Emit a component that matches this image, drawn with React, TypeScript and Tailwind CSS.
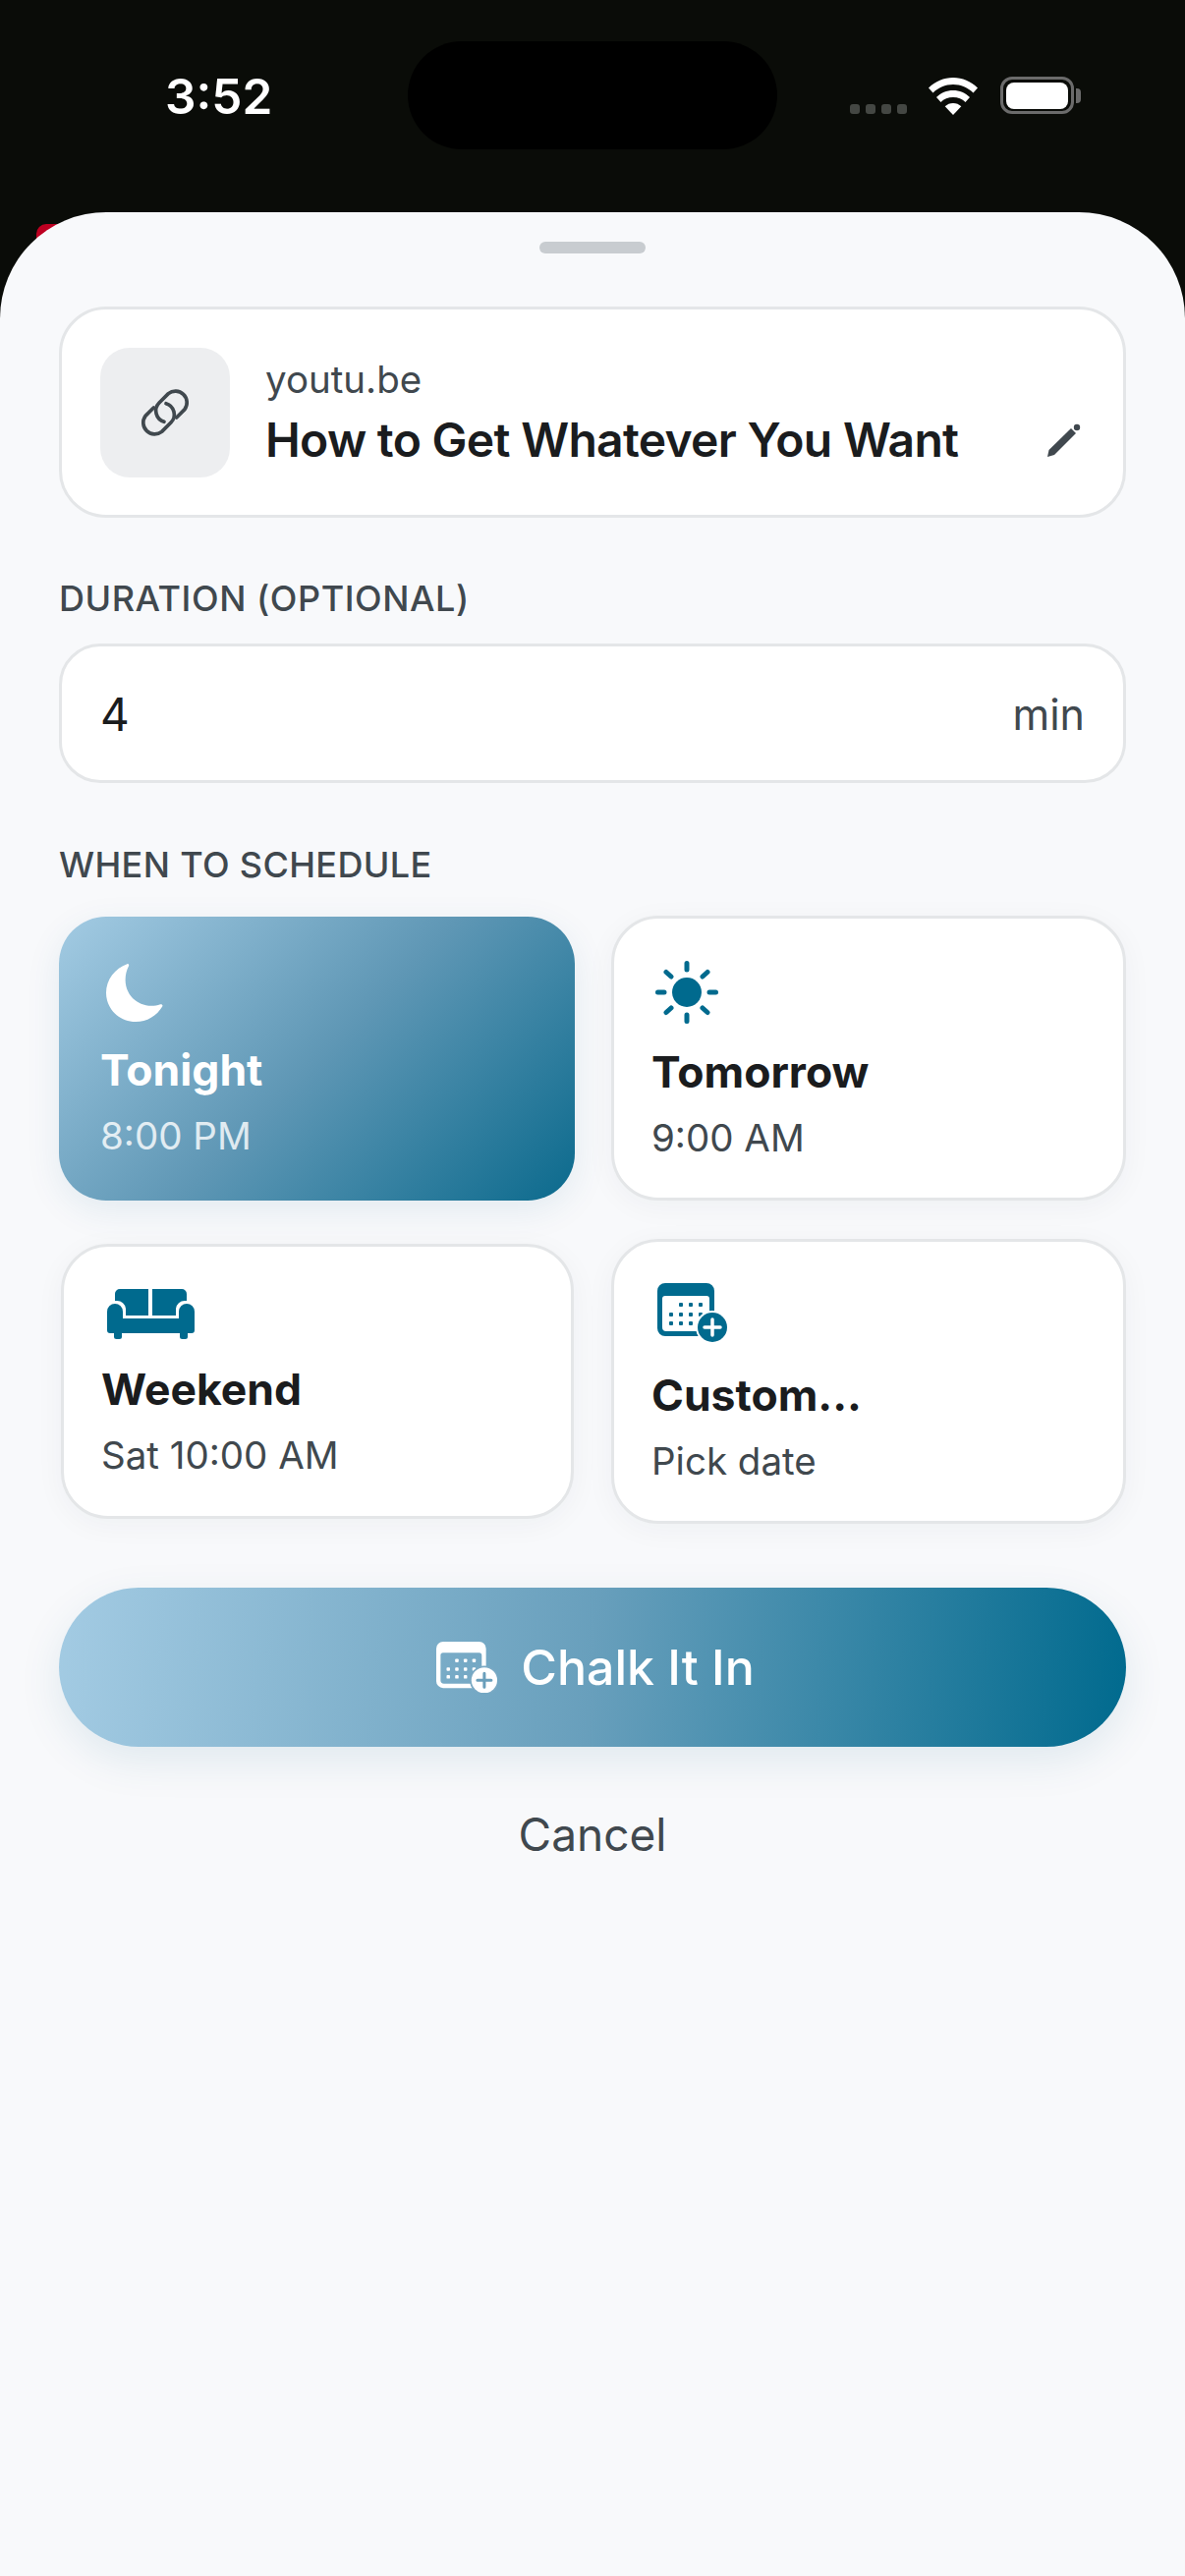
import React from "react";

const font = { fontFamily: "Inter, 'Noto Sans', sans-serif" };

function Moon() {
  return (
    <svg width="60" height="60" viewBox="0 0 60 60" fill="#fff">
      <path d="M22.5 1.200C10 5.600 1 17.200 1 30.500 1 47 14.500 60 31 60c11.600 0 21.600-6.200 27.200-15.600.8-1.300-.5-2.600-2-2.100-2.900 1-6 1.500-9.200 1.500C32.200 43.800 20.600 32 20.600 17.400c0-5 1.200-10 3.400-14.200.6-1.300-.4-2.500-1.500-2.200z" />
    </svg>
  );
}

function Sun() {
  return (
    <svg width="64" height="64" viewBox="0 0 64 64" fill="none" stroke="#006a8e" strokeWidth="5" strokeLinecap="round">
      <circle cx="32" cy="32" r="15" fill="#006a8e" stroke="none" />
      <path d="M32 2.500v6.500M32 55v6.500M2.500 32H9M55 32h6.500M11 11.500l5 4.500M48 48l5 4.500M53 11.500l-5 4.500M16 48l-5 4.500" />
    </svg>
  );
}

function Sofa() {
  return (
    <svg width="89" height="51" viewBox="0 0 89 51" fill="#006a8e">
      <path d="M8 5a5 5 0 0 1 5-5h29v27H19v-7a9 9 0 0 0-9-8H8z" />
      <path d="M46 0h30a5 5 0 0 1 5 5v7h-2a9 9 0 0 0-9 8v7H46z" />
      <path d="M0 23a8 8 0 0 1 16 0v7h57v-7a8 8 0 0 1 16 0v19a3 3 0 0 1-3 3H3a3 3 0 0 1-3-3z" />
      <path d="M7 45h8v3.500a2.500 2.500 0 0 1-2.500 2.500h-3A2.500 2.500 0 0 1 7 48.500z" />
      <path d="M74 45h8v3.500a2.500 2.500 0 0 1-2.500 2.500h-3a2.500 2.500 0 0 1-2.500-2.500z" />
    </svg>
  );
}

function CalendarPlus({ main, bg, cut, size }: { main: string; bg: string; cut: string; size: number }) {
  return (
    <svg width={size} height={(size * 60) / 71} viewBox="0 0 71 60" fill="none">
      <path
        fillRule="evenodd"
        clipRule="evenodd"
        fill={main}
        d="M8 0h42a8 8 0 0 1 8 8v38a8 8 0 0 1-8 8H8a8 8 0 0 1-8-8V8a8 8 0 0 1 8-8zM8 13a3 3 0 0 0-3 3v29a4 4 0 0 0 4 4h44V16a3 3 0 0 0-3-3z"
      />
      <g fill={main}>
        <rect x="22" y="20" width="4" height="4" rx="1" />
        <rect x="32" y="20" width="4" height="4" rx="1" />
        <rect x="42" y="20" width="4" height="4" rx="1" />
        <rect x="12" y="30" width="4" height="4" rx="1" />
        <rect x="22" y="30" width="4" height="4" rx="1" />
        <rect x="32" y="30" width="4" height="4" rx="1" />
        <rect x="42" y="30" width="4" height="4" rx="1" />
        <rect x="12" y="39" width="4" height="4" rx="1" />
        <rect x="22" y="39" width="4" height="4" rx="1" />
        <rect x="32" y="39" width="4" height="4" rx="1" />
      </g>
      <circle cx="56" cy="45" r="17" fill={bg} />
      <circle cx="56" cy="45" r="15" fill={main} />
      <path d="M56 37v16M48 45h16" stroke={cut} strokeWidth="3.500" strokeLinecap="round" />
    </svg>
  );
}

function LinkGlyph() {
  return (
    <svg width="80" height="70" viewBox="-5 0 240 210" fill="none" stroke="#40484e" strokeWidth="11" strokeLinecap="round" strokeLinejoin="round">
      <path d="M150 120L175 95A35 35 0 0 0 125 47L97 75A35 35 0 0 0 112 133" />
      <path d="M80 90L55 115A35 35 0 0 0 105 163L133 135A35 35 0 0 0 118 77" />
    </svg>
  );
}

function Pencil() {
  return (
    <svg width="36" height="36" viewBox="0 0 36 36" fill="#40484e">
      <path d="M1 35l1.500-7L25 6l5 5L8 33z" />
      <circle cx="31" cy="5" r="3.200" />
    </svg>
  );
}

function Wifi() {
  return (
    <svg width="50" height="38" viewBox="0 0 50 38" fill="#fff">
      <path d="M25 0C15.500 0 7 3.800 0 10.500l4.500 5C10 10.200 17 7 25 7s15 3.200 20.500 8.500l4.500-5C43 3.800 34.500 0 25 0z" />
      <path d="M25 13c-6.500 0-12.500 2.500-17 7l4.500 5c3.200-3.200 7.500-5 12.500-5s9.300 1.800 12.500 5l4.500-5c-4.500-4.500-10.500-7-17-7z" />
      <path d="M25 26c-3.200 0-6 1.200-8.300 3.300L25 38l8.300-8.700C31 27.200 28.200 26 25 26z" />
    </svg>
  );
}

function Card({ title, sub, icon, iconClass, cardClass }: { title: string; sub: string; icon: React.ReactNode; iconClass: string; cardClass: string }) {
  return (
    <div className={`flex flex-col rounded-[48px] border-[3px] border-[#e4e6e8] bg-white pl-[38px] shadow-[0_6px_30px_rgba(0,40,60,0.045)] ${cardClass}`}>
      <div className={`flex items-start ${iconClass}`}>{icon}</div>
      <div className="text-[44.500px] font-bold leading-[54px] text-[#1a1c1e]">{title}</div>
      <div className="mt-[17px] text-[38.500px] leading-[46px] text-[#40484e]">{sub}</div>
    </div>
  );
}

export default function App() {
  return (
    <div style={font} className="relative min-h-[2622px] w-[1206px] overflow-hidden bg-[#0a0c08]">
      <div className="relative h-[216px]">
        <span className="absolute left-[168px] top-[68px] text-[49.500px] font-semibold leading-[60px] text-white">3:52</span>
        <div className="absolute left-[415px] top-[42px] h-[110px] w-[376px] rounded-[55px] bg-black" />
        <div className="absolute left-[865px] top-[106px] flex gap-[6px]">
          <span className="h-[10px] w-[10px] rounded-[3px] bg-[#444743]" />
          <span className="h-[10px] w-[10px] rounded-[3px] bg-[#444743]" />
          <span className="h-[10px] w-[10px] rounded-[3px] bg-[#444743]" />
          <span className="h-[10px] w-[10px] rounded-[3px] bg-[#444743]" />
        </div>
        <div className="absolute left-[945px] top-[79px]"><Wifi /></div>
        <div className="absolute left-[1018px] top-[78px] flex h-[38px] w-[75px] items-center justify-center rounded-[12px] border-[3px] border-[#6b6b6b]">
          <span className="h-[27px] w-[63px] rounded-[8px] bg-white" />
        </div>
        <div className="absolute left-[1095px] top-[90px] h-[15px] w-[5px] rounded-r-[4px] bg-[#6b6b6b]" />
        <div className="absolute left-[37px] top-[228px] h-[50px] w-[40px] rounded-[10px] bg-[#bd0021]" />
      </div>

      <div className="relative flex min-h-[2406px] flex-col rounded-t-[108px] bg-[#f8f9fb] px-[60px]">
        <div className="mx-auto mt-[30px] h-[12px] w-[108px] rounded-[6px] bg-[#c8ccd0]" />

        <div className="mt-[54px] flex h-[215px] items-center rounded-[48px] border-[3px] border-[#e4e6e8] bg-white px-[39px]">
          <div className="flex h-[132px] w-[132px] shrink-0 items-center justify-center rounded-[30px] bg-[#edeef0]">
            <LinkGlyph />
          </div>
          <div className="ml-[36px] flex min-w-0 flex-1 flex-col">
            <div className="text-[38.500px] leading-[46px] text-[#40484e]">youtu.be</div>
            <div className="mt-[10px] flex items-center justify-between pr-[3px]">
              <span className="text-[48px] font-semibold leading-[58px] tracking-[-0.7px] text-[#1a1c1e]">How to Get Whatever You Want</span>
              <Pencil />
            </div>
          </div>
        </div>

        <div className="mt-[60px] text-[36px] font-medium leading-[44px] tracking-[0.55px] text-[#40484e]">DURATION (OPTIONAL)</div>
        <div className="mt-[24px] flex h-[142px] items-center justify-between rounded-[42px] border-[3px] border-[#e4e6e8] bg-white px-[39px] pt-[2px]">
          <span className="text-[46px] leading-[58px] text-[#1a1c1e]">4</span>
          <span className="text-[43px] leading-[54px] text-[#40484e]">min</span>
        </div>

        <div className="mt-[61px] text-[36px] font-medium leading-[44px] tracking-[0.35px] text-[#40484e]">WHEN TO SCHEDULE</div>

        <div className="mt-[30px] flex gap-[37px]">
          <div className="flex w-[525px] flex-col gap-[44px] pt-[1px]">
            <div className="flex h-[289px] flex-col rounded-[48px] bg-[linear-gradient(135deg,#a3cbe3,#5f97b5_50%,#0b6a8d)] pl-[42px] shadow-[0_10px_36px_rgba(0,90,130,0.09)]">
              <div className="flex h-[129px] items-start pl-[5px] pt-[47px]"><Moon /></div>
              <div className="text-[44.500px] font-bold leading-[54px] text-white">Tonight</div>
              <div className="mt-[17px] text-[38.500px] leading-[46px] text-white/80">8:00 PM</div>
            </div>
            <div className="ml-[2px] w-[522px]">
              <Card title="Weekend" sub="Sat 10:00 AM" icon={<Sofa />} iconClass="h-[118px] pl-[6px] pt-[43px]" cardClass="h-[280px]" />
            </div>
          </div>
          <div className="flex w-[524px] flex-col gap-[39px]">
            <Card title="Tomorrow" sub="9:00 AM" icon={<Sun />} iconClass="h-[129px] pl-[4px] pt-[43px]" cardClass="h-[290px]" />
            <Card title="Custom..." sub="Pick date" icon={<CalendarPlus main="#006a8e" bg="#ffffff" cut="#ffffff" size={71} />} iconClass="h-[129px] pl-[6px] pt-[42px]" cardClass="h-[290px]" />
          </div>
        </div>

        <div className="mt-[65px] flex h-[162px] items-center justify-center gap-[24px] rounded-[81px] bg-[linear-gradient(95deg,#a3cbe3,#689fbc_50%,#006a8e)] pl-[6px] shadow-[0_14px_44px_rgba(0,90,130,0.1)]">
          <CalendarPlus main="#ffffff" bg="#7aa9c4" cut="#6a9fbb" size={62} />
          <span className="text-[50px] font-medium leading-[62px] text-white">Chalk It In</span>
        </div>

        <div className="mt-[60px] text-center text-[46px] leading-[58px] text-[#40484e]">Cancel</div>
      </div>
    </div>
  );
}
